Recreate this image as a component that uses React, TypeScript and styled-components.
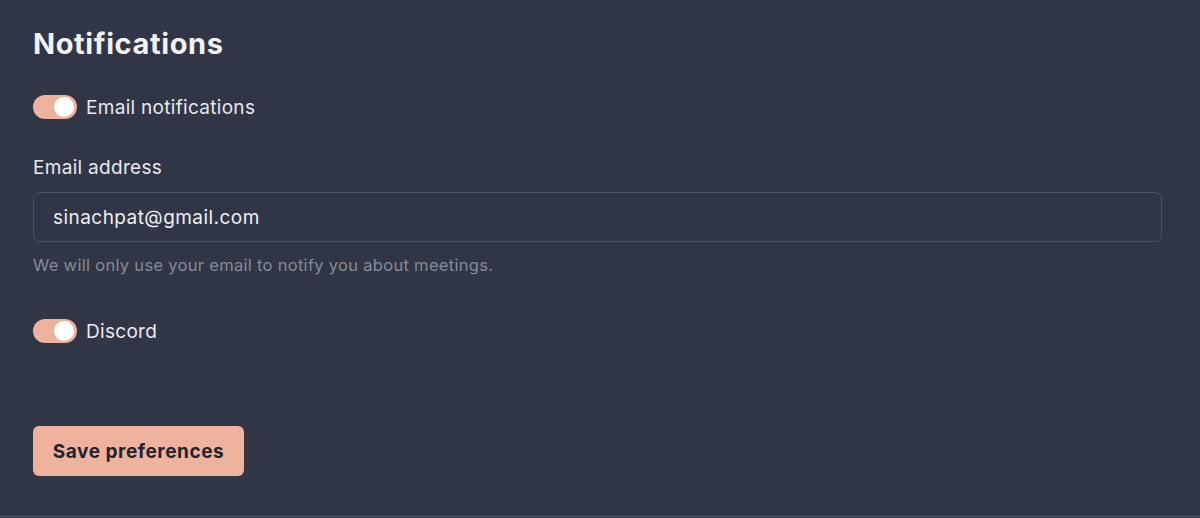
import styled, { createGlobalStyle } from "styled-components";

const GlobalStyle = createGlobalStyle`
  html, body {
    margin: 0;
    background: #303646;
  }
  body {
    font-family: "Inter", "Lato", sans-serif;
  }
`;

const Page = styled.main`
  height: 517px;
  box-sizing: border-box;
  padding: 26px 38px 0 33px;
  background: #303646;
  border-bottom: 1px solid #565b68;
  color: #eceef2;
`;

const Title = styled.h2`
  margin: 0 0 34px;
  font-size: 29px;
  line-height: 35px;
  font-weight: 700;
  letter-spacing: 0.6px;
  color: #f2f3f5;
`;

const ToggleRow = styled.label<{ $gap?: number }>`
  display: flex;
  align-items: center;
  gap: 9px;
  height: 24px;
  font-size: 19px;
  letter-spacing: 0.3px;
  color: #e8eaee;
  margin-bottom: ${(p) => p.$gap ?? 0}px;
`;

const Track = styled.span<{ $on: boolean }>`
  position: relative;
  width: 44px;
  height: 24px;
  border-radius: 12px;
  background: ${(p) => (p.$on ? "#efb39d" : "#555b69")};
  flex-shrink: 0;
`;

const Knob = styled.span<{ $on: boolean }>`
  position: absolute;
  top: 2px;
  left: ${(p) => (p.$on ? "21px" : "3px")};
  width: 20px;
  height: 20px;
  border-radius: 50%;
  background: #ffffff;
`;

const Field = styled.div`
  display: flex;
  flex-direction: column;
  margin-bottom: 44px;
`;

const FieldLabel = styled.div`
  font-size: 19px;
  line-height: 23px;
  letter-spacing: 0.3px;
  color: #e8eaee;
  margin-bottom: 13px;
`;

const Input = styled.input`
  height: 50px;
  box-sizing: border-box;
  border: 1.5px solid #4d5363;
  border-radius: 7px;
  background: transparent;
  padding: 0 19px;
  font-family: inherit;
  font-size: 19px;
  letter-spacing: 0.45px;
  color: #eef0f3;
  outline: none;
`;

const Help = styled.p`
  margin: 14px 0 0;
  font-size: 16.5px;
  line-height: 19px;
  letter-spacing: 0.3px;
  color: #868b97;
`;

const SaveButton = styled.button`
  margin-top: 83px;
  width: 211px;
  height: 50px;
  border: none;
  border-radius: 6px;
  background: #efb39d;
  color: #1e2432;
  font-family: inherit;
  font-size: 19px;
  letter-spacing: 0.55px;
  font-weight: 700;
  cursor: pointer;
`;

const Toggle = ({ on }: { on: boolean }) => (
  <Track $on={on}>
    <Knob $on={on} />
  </Track>
);

export default function App() {
  return (
    <>
      <GlobalStyle />
      <Page>
        <Title>Notifications</Title>
        <ToggleRow $gap={37}>
          <Toggle on />
          Email notifications
        </ToggleRow>
        <Field>
          <FieldLabel>Email address</FieldLabel>
          <Input defaultValue="sinachpat@gmail.com" />
          <Help>We will only use your email to notify you about meetings.</Help>
        </Field>
        <ToggleRow>
          <Toggle on />
          Discord
        </ToggleRow>
        <SaveButton>Save preferences</SaveButton>
      </Page>
    </>
  );
}
